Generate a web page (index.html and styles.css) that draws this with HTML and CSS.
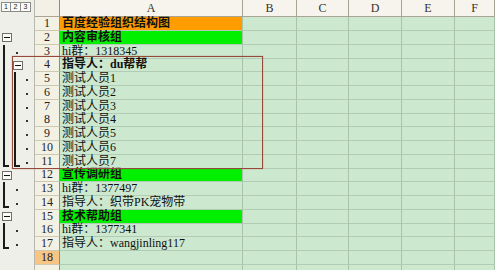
FILE: index.html
```html
<!DOCTYPE html>
<html lang="zh-CN">
<head>
<meta charset="utf-8">
<link rel="stylesheet" href="styles.css">
</head>
<body>
<div class="sheet">
  <div class="row head">
    <div class="ol ol-top"><span class="lvl">1</span><span class="lvl">2</span><span class="lvl">3</span></div>
    <div class="rn corner"></div>
    <div class="ch">A</div><div class="ch">B</div><div class="ch">C</div><div class="ch">D</div><div class="ch">E</div><div class="ch">F</div><div class="ch"></div>
  </div>

  <div class="row"><div class="ol"></div><div class="rn">1</div><div class="c a orange b">百度经验组织结构图</div><div class="c"></div><div class="c"></div><div class="c"></div><div class="c"></div><div class="c"></div><div class="c"></div></div>
  <div class="row"><div class="ol"><span class="s"><i class="minus"></i></span><span class="s"></span><span class="s"></span></div><div class="rn">2</div><div class="c a green b">内容审核组</div><div class="c"></div><div class="c"></div><div class="c"></div><div class="c"></div><div class="c"></div><div class="c"></div></div>
  <div class="row"><div class="ol"><span class="s vl"></span><span class="s"><i class="dot"></i></span><span class="s"></span></div><div class="rn">3</div><div class="c a">hi群：1318345</div><div class="c"></div><div class="c"></div><div class="c"></div><div class="c"></div><div class="c"></div><div class="c"></div></div>
  <div class="row"><div class="ol"><span class="s vl"></span><span class="s"><i class="minus"></i></span><span class="s"></span></div><div class="rn">4</div><div class="c a b">指导人：du帮帮</div><div class="c"></div><div class="c"></div><div class="c"></div><div class="c"></div><div class="c"></div><div class="c"></div></div>
  <div class="row"><div class="ol"><span class="s vl"></span><span class="s vl"></span><span class="s"><i class="dot"></i></span></div><div class="rn">5</div><div class="c a">测试人员1</div><div class="c"></div><div class="c"></div><div class="c"></div><div class="c"></div><div class="c"></div><div class="c"></div></div>
  <div class="row"><div class="ol"><span class="s vl"></span><span class="s vl"></span><span class="s"><i class="dot"></i></span></div><div class="rn">6</div><div class="c a">测试人员2</div><div class="c"></div><div class="c"></div><div class="c"></div><div class="c"></div><div class="c"></div><div class="c"></div></div>
  <div class="row"><div class="ol"><span class="s vl"></span><span class="s vl"></span><span class="s"><i class="dot"></i></span></div><div class="rn">7</div><div class="c a">测试人员3</div><div class="c"></div><div class="c"></div><div class="c"></div><div class="c"></div><div class="c"></div><div class="c"></div></div>
  <div class="row"><div class="ol"><span class="s vl"></span><span class="s vl"></span><span class="s"><i class="dot"></i></span></div><div class="rn">8</div><div class="c a">测试人员4</div><div class="c"></div><div class="c"></div><div class="c"></div><div class="c"></div><div class="c"></div><div class="c"></div></div>
  <div class="row"><div class="ol"><span class="s vl"></span><span class="s vl"></span><span class="s"><i class="dot"></i></span></div><div class="rn">9</div><div class="c a">测试人员5</div><div class="c"></div><div class="c"></div><div class="c"></div><div class="c"></div><div class="c"></div><div class="c"></div></div>
  <div class="row"><div class="ol"><span class="s vl"></span><span class="s vl"></span><span class="s"><i class="dot"></i></span></div><div class="rn">10</div><div class="c a">测试人员6</div><div class="c"></div><div class="c"></div><div class="c"></div><div class="c"></div><div class="c"></div><div class="c"></div></div>
  <div class="row"><div class="ol"><span class="s vl end"></span><span class="s vl end"></span><span class="s"><i class="dot"></i></span></div><div class="rn">11</div><div class="c a">测试人员7</div><div class="c"></div><div class="c"></div><div class="c"></div><div class="c"></div><div class="c"></div><div class="c"></div></div>
  <div class="row"><div class="ol"><span class="s"><i class="minus"></i></span><span class="s"></span><span class="s"></span></div><div class="rn">12</div><div class="c a green b">宣传调研组</div><div class="c"></div><div class="c"></div><div class="c"></div><div class="c"></div><div class="c"></div><div class="c"></div></div>
  <div class="row"><div class="ol"><span class="s vl"></span><span class="s"><i class="dot"></i></span><span class="s"></span></div><div class="rn">13</div><div class="c a">hi群：1377497</div><div class="c"></div><div class="c"></div><div class="c"></div><div class="c"></div><div class="c"></div><div class="c"></div></div>
  <div class="row"><div class="ol"><span class="s vl end"></span><span class="s"><i class="dot"></i></span><span class="s"></span></div><div class="rn">14</div><div class="c a">指导人：织带PK宠物带</div><div class="c"></div><div class="c"></div><div class="c"></div><div class="c"></div><div class="c"></div><div class="c"></div></div>
  <div class="row"><div class="ol"><span class="s"><i class="minus"></i></span><span class="s"></span><span class="s"></span></div><div class="rn">15</div><div class="c a green b">技术帮助组</div><div class="c"></div><div class="c"></div><div class="c"></div><div class="c"></div><div class="c"></div><div class="c"></div></div>
  <div class="row"><div class="ol"><span class="s vl"></span><span class="s"><i class="dot"></i></span><span class="s"></span></div><div class="rn">16</div><div class="c a">hi群：1377341</div><div class="c"></div><div class="c"></div><div class="c"></div><div class="c"></div><div class="c"></div><div class="c"></div></div>
  <div class="row"><div class="ol"><span class="s vl end"></span><span class="s"><i class="dot"></i></span><span class="s"></span></div><div class="rn">17</div><div class="c a">指导人：wangjinling117</div><div class="c"></div><div class="c"></div><div class="c"></div><div class="c"></div><div class="c"></div><div class="c"></div></div>
  <div class="row"><div class="ol"></div><div class="rn sel">18</div><div class="c a"></div><div class="c"></div><div class="c"></div><div class="c"></div><div class="c"></div><div class="c"></div><div class="c"></div></div>
  <div class="row"><div class="ol"></div><div class="rn"></div><div class="c a"></div><div class="c"></div><div class="c"></div><div class="c"></div><div class="c"></div><div class="c"></div><div class="c"></div></div>

  <div class="mark"></div>
</div>
</body>
</html>
```

FILE: styles.css
```css
* { box-sizing: border-box; margin: 0; padding: 0; }
html, body { width: 495px; height: 270px; overflow: hidden; background: #cce8cf; }
body { font-family: "Liberation Serif", "Noto Sans CJK SC", serif; font-size: 12px; color: #111; }

.sheet { position: relative; width: 495px; }

.row {
  display: grid;
  grid-template-columns: 35px 25px 183px 54px 52px 53px 53px 40px;
  height: 13.75px;
}
.row.head { height: 17px; }

.ol {
  background: #efefea;
  border-right: 1px solid #b9b8ae;
  display: flex;
  padding-left: 2px;
  height: 100%;
}
.ol-top { align-items: flex-start; padding-top: 2px; padding-left: 1px; gap: 0; }
.lvl {
  width: 10px; height: 10px;
  border: 1px solid #8a8a86;
  background: #fafaf7;
  font-family: "Liberation Sans", sans-serif;
  font-size: 7px; line-height: 8px;
  text-align: center; color: #222;
}
.lvl + .lvl { border-left: none; width: 10px; }

.s { width: 11px; height: 100%; position: relative; display: flex; align-items: center; }
.vl::before {
  content: ""; position: absolute; left: 1px; top: 0; bottom: 0;
  width: 2px; background: #1a1a1a;
}
.vl.end::before { bottom: 2px; }
.vl.end::after {
  content: ""; position: absolute; left: 1px; bottom: 2px;
  width: 6px; height: 2px; background: #1a1a1a;
}
.minus {
  display: block; width: 10px; height: 9px;
  border: 1px solid #6e6e6a; background: #fbfbf8;
  position: relative;
}
.minus::after {
  content: ""; position: absolute; left: 1px; right: 1px; top: 3px;
  height: 1px; background: #111;
}
.dot { display: block; width: 2px; height: 2px; background: #333; margin-left: 3px; margin-top: 2px; }

.rn {
  background: #f3f1e4;
  border-right: 1px solid #8f8c7c;
  border-bottom: 1px solid #cdc9b3;
  text-align: center;
  font-family: "Liberation Serif", serif;
  font-size: 12px; line-height: 13px;
  color: #222;
}
.rn.corner { background: #f3f1e6; border-bottom: 1px solid #a9a592; }
.rn.sel { background: #f8c585; color: #222; }

.ch {
  background: #f6f4ec;
  border-right: 1px solid #a5a394;
  border-bottom: 1px solid #a9a592;
  text-align: center;
  font-family: "Liberation Serif", serif;
  font-size: 12px; line-height: 16px; color: #333;
}

.c {
  border-right: 1px solid #a9c3ab;
  border-bottom: 1px solid #b2cbb4;
  line-height: 13px;
  white-space: nowrap;
  overflow: visible;
}
.c.a { padding-left: 2px; position: relative; z-index: 1; }
.b { font-weight: bold; }
.orange { background: #ff9c00; }
.green { background: #00f000; }

.mark {
  position: absolute;
  left: 12px; top: 56px;
  width: 251px; height: 113px;
  border: 1px solid #95493a;
  box-shadow: 0 0 1px 0 rgba(170, 90, 70, 0.7);
  pointer-events: none;
  z-index: 2;
}
```
